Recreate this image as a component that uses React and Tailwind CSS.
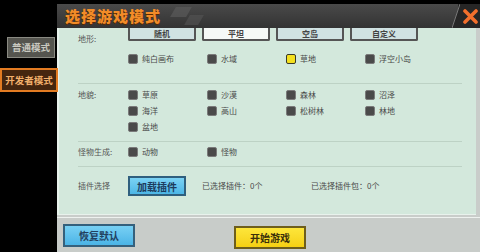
import React from "react";

const font = { fontFamily: '"Noto Sans CJK SC", "Noto Sans", sans-serif' };

const Check = ({ label, on }) => (
  <div className="flex items-center gap-[4px] h-[16px]">
    <span
      className={
        on
          ? "w-[10px] h-[10px] rounded-[2px] bg-[#f4e01e] border border-[#3a3a2a]"
          : "w-[10px] h-[10px] rounded-[2px] bg-[#4a4a4a] border border-[#7a7a7a]"
      }
    />
    <span className="text-[8px] leading-none text-[#4a4a4a]">{label}</span>
  </div>
);

const Row = ({ label, children, className = "" }) => (
  <div className={"flex " + className}>
    <div className="w-[50px] text-[8px] leading-[16px] text-[#555]">{label}</div>
    <div className="grid grid-cols-[repeat(4,79px)]">{children}</div>
  </div>
);

const terrains = ["随机", "平坦", "空岛", "自定义"];

export default function App() {
  return (
    <div className="w-[480px] h-[252px] bg-black flex overflow-hidden" style={font}>
      {/* left tabs */}
      <div className="w-[57px] flex flex-col pt-[37px] relative z-10">
        <div className="ml-[7px] w-[48px] h-[21px] bg-[#55554f] border border-[#8a8a82] flex items-center justify-center text-[9.5px] font-semibold text-[#c9c9c0]">
          普通模式
        </div>
        <div className="mt-[10px] w-[58px] h-[24px] bg-[#45260f] border-2 border-[#e27b22] flex items-center justify-center text-[9.5px] font-semibold text-[#f2b06c]">
          开发者模式
        </div>
      </div>

      {/* dialog */}
      <div className="flex-1 flex flex-col pt-[4px]">
        <div className="h-[24px] flex bg-gradient-to-b from-[#4a4a4a] to-[#333] relative">
          <div className="flex-1 flex items-center pl-[8px] relative">
            <span className="text-[15px] font-black text-[#f28c28] tracking-[1px] [text-shadow:0_1px_0_#5a2a00]">
              选择游戏模式
            </span>
            <div className="absolute left-[116px] top-[3px] w-[16px] h-[10px] bg-[#5a5a5a] skew-x-[-30deg] opacity-70" />
            <div className="absolute left-[130px] top-[11px] w-[14px] h-[10px] bg-[#555] skew-x-[-30deg] opacity-60" />
          </div>
          <div className="w-[22px] bg-[#262626] relative flex items-center justify-end pr-[2px]">
            <svg className="absolute left-[-6px] top-0" width="8" height="24" viewBox="0 0 8 24">
              <polygon points="8,0 8,24 0,24" fill="#262626" />
              <line x1="8" y1="0" x2="0" y2="24" stroke="#777" strokeWidth="1" />
            </svg>
            <svg width="15" height="15" viewBox="0 0 15 15">
              <path d="M2 2 L13 13 M13 2 L2 13" stroke="#f26f2c" strokeWidth="3.6" strokeLinecap="round" />
            </svg>
          </div>
        </div>

        {/* content */}
        <div className="h-[189px] bg-[#c9cdca] flex pb-[2px]">
          <div className="flex-1 mr-[4px] bg-[#d3e8dc] border-l-2 border-b border-[#e8f2ec] pl-[19px] pr-[14px] flex flex-col">
            <div className="h-[56px] border-b border-[#bdd2c5]">
              <div className="flex">
                <div className="w-[50px] text-[8px] text-[#555] pt-[5px]">地形:</div>
                <div className="flex gap-[6px]">
                  {terrains.map((t) => (
                    <div
                      key={t}
                      className={
                        (t === "平坦" ? "bg-[#f6f9f7]" : "bg-[#d0e2e2]") +
                        " w-[68px] h-[13px] border-x-2 border-b-2 border-[#555] rounded-b-[2px] flex items-center justify-center text-[8px] font-bold text-[#444]"
                      }
                    >
                      {t}
                    </div>
                  ))}
                </div>
              </div>
              <Row label="" className="mt-[6px]">
                <Check label="纯白画布" />
                <Check label="水域" />
                <Check label="草地" on />
                <Check label="浮空小岛" />
              </Row>
            </div>

            <div className="h-[58px] border-b border-[#bdd2c5] pt-[3px]">
              <Row label="地貌:">
                <Check label="草原" />
                <Check label="沙漠" />
                <Check label="森林" />
                <Check label="沼泽" />
                <Check label="海洋" />
                <Check label="高山" />
                <Check label="松树林" />
                <Check label="林地" />
                <Check label="盆地" />
              </Row>
            </div>

            <div className="h-[25px] border-b border-[#bdd2c5] pt-[2px]">
              <Row label="怪物生成:">
                <Check label="动物" />
                <Check label="怪物" />
              </Row>
            </div>

            <div className="flex items-center pt-[9px]">
              <div className="w-[50px] text-[8px] text-[#555]">插件选择</div>
              <div className="w-[58px] h-[20px] bg-gradient-to-b from-[#7ad2f4] to-[#4cb6e6] border-2 border-[#2f5f7e] flex items-center justify-center text-[10px] font-bold text-[#1d3b5c]">
                加载插件
              </div>
              <div className="ml-[16px] w-[109px] text-[8px] text-[#4a4a4a]">已选择插件：0个</div>
              <div className="text-[8px] text-[#4a4a4a]">已选择插件包：0个</div>
            </div>
          </div>
        </div>

        {/* bottom bar */}
        <div className="flex-1 bg-[#c8ccc9] flex items-start border-t border-[#eef2ef]">
          <div className="ml-[6px] mt-[6px] w-[72px] h-[23px] bg-gradient-to-b from-[#78d0f4] to-[#4ab4e6] border-2 border-[#35607c] flex items-center justify-center text-[10px] font-bold text-[#22405e]">
            恢复默认
          </div>
          <div className="ml-[99px] mt-[8px] w-[72px] h-[23px] bg-gradient-to-b from-[#fde63a] to-[#f5d010] border-2 border-[#6e5e1c] flex items-center justify-center text-[10px] font-bold text-[#3a300a]">
            开始游戏
          </div>
        </div>
      </div>
    </div>
  );
}
